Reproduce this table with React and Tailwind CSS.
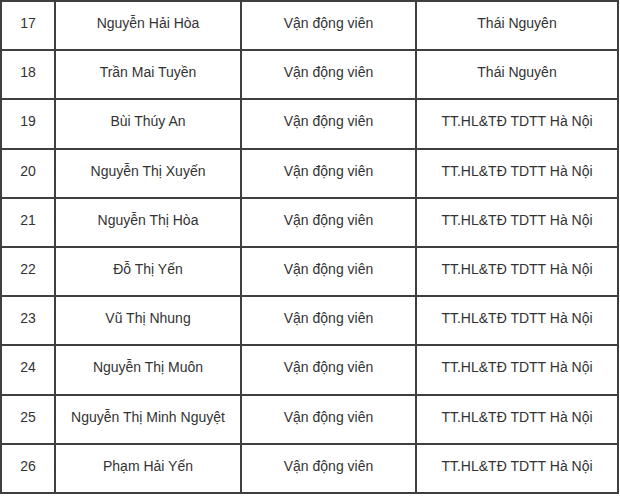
const rows = [
  ['17', 'Nguyễn Hải Hòa', 'Vận động viên', 'Thái Nguyên'],
  ['18', 'Trần Mai Tuyền', 'Vận động viên', 'Thái Nguyên'],
  ['19', 'Bùi Thúy An', 'Vận động viên', 'TT.HL&TĐ TDTT Hà Nội'],
  ['20', 'Nguyễn Thị Xuyến', 'Vận động viên', 'TT.HL&TĐ TDTT Hà Nội'],
  ['21', 'Nguyễn Thị Hòa', 'Vận động viên', 'TT.HL&TĐ TDTT Hà Nội'],
  ['22', 'Đỗ Thị Yến', 'Vận động viên', 'TT.HL&TĐ TDTT Hà Nội'],
  ['23', 'Vũ Thị Nhung', 'Vận động viên', 'TT.HL&TĐ TDTT Hà Nội'],
  ['24', 'Nguyễn Thị Muôn', 'Vận động viên', 'TT.HL&TĐ TDTT Hà Nội'],
  ['25', 'Nguyễn Thị Minh Nguyệt', 'Vận động viên', 'TT.HL&TĐ TDTT Hà Nội'],
  ['26', 'Phạm Hải Yến', 'Vận động viên', 'TT.HL&TĐ TDTT Hà Nội'],
]

const cell = 'flex items-center justify-center pb-[4px] border-r-2 border-b-2 border-[#3e3e3e]'

export default function App() {
  return (
    <div className="min-h-screen bg-white text-[#333] text-[14px] font-['Liberation_Sans',Arial,sans-serif]">
      <div className="w-[619px] border-l-2 border-t-2 border-[#3e3e3e] grid grid-cols-[54px_186px_175px_202px] auto-rows-[49.2px]">
        {rows.map((r) => (
          <div key={r[0]} className="contents">
            <div className={cell}>{r[0]}</div>
            <div className={cell}>{r[1]}</div>
            <div className={cell}>{r[2]}</div>
            <div className={cell}>{r[3]}</div>
          </div>
        ))}
      </div>
    </div>
  )
}
